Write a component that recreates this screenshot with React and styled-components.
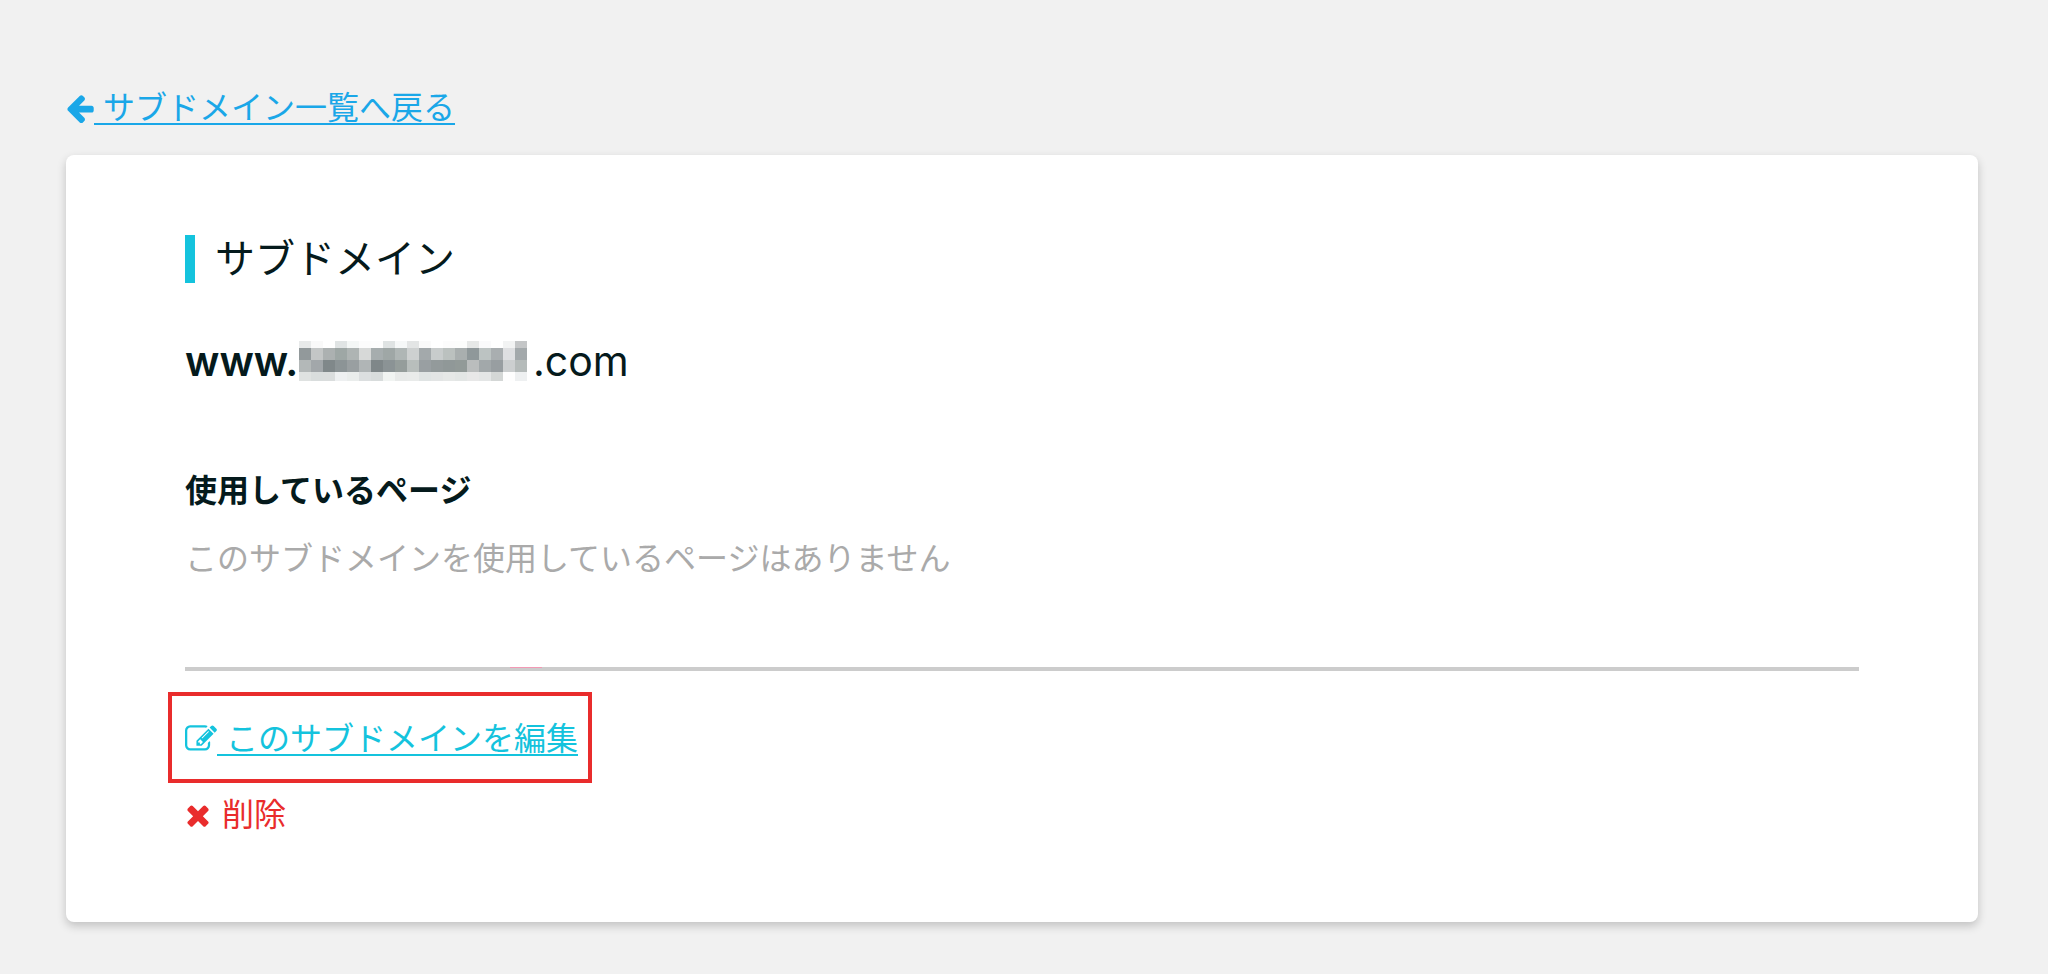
import styled, { createGlobalStyle } from "styled-components";

const GlobalStyle = createGlobalStyle`
  * {
    box-sizing: border-box;
  }
  body {
    margin: 0;
    background-color: #f1f1f1;
    color: #051a1c;
    font-family: Inter, "Noto Sans CJK JP", sans-serif;
    font-size: 32px;
    line-height: 48px;
  }
`;
const Page = styled.main`
  padding: 84px 70px 52px 66px;
`;
const IconLink = styled.a`
  display: flex;
  align-items: center;
  width: fit-content;
  color: ${(props) => props.$color};
  text-decoration: none;
`;
const Icon = styled.svg`
  flex: none;
  width: ${(props) => (props.$wide ? "32px" : "28px")};
  height: 32px;
  fill: currentColor;
`;
const LinkText = styled.span`
  white-space: pre;
  text-decoration: ${(props) => (props.$plain ? "none" : "underline")};
  text-decoration-thickness: 2px;
  text-underline-offset: 4px;
  text-decoration-skip-ink: none;
`;
const Card = styled.section`
  margin-top: 23px;
  padding: 80px 119px 83px;
  border-radius: 8px;
  background-color: #fff;
  box-shadow: 0 4px 10px rgba(0, 0, 0, 0.2);
`;
const Title = styled.h1`
  margin: 0;
  padding-left: 20px;
  border-left: 10px solid #14c3dd;
  font-size: 40px;
  font-weight: normal;
  line-height: 48px;
`;
const Domain = styled.p`
  display: flex;
  align-items: center;
  margin: 50px 0 0;
  font-size: 41px;
  line-height: 56px;
  b {
    min-width: 114px;
    font-weight: 600;
  }
`;
const Mosaic = styled.svg`
  flex: none;
  width: 228px;
  height: 40px;
  margin-right: 6px;
`;
const SubTitle = styled.h2`
  margin: 78px 0 0;
  font-size: 32px;
  font-weight: bold;
  line-height: 48px;
`;
const Empty = styled.p`
  margin: 20px 0 0;
  color: #aaa;
`;
const Divider = styled.hr`
  height: 4px;
  margin: 84px 0 0;
  border: 0;
  background: linear-gradient(#f29ab5, #f29ab5) 325px 0 / 32px 1px no-repeat
    #ccc;
`;
const Actions = styled.div`
  display: flex;
  flex-direction: column;
  align-items: flex-start;
  gap: 8px;
  margin: 21px 0 0 -17px;
`;
const Highlight = styled.div`
  padding: 19px 10px 16px 13px;
  border: 4px solid #e92c2c;
`;
const DeleteRow = styled.div`
  padding-left: 17px;
`;

// hidden part of the domain name, as rows of grey blocks
const mosaicRows = [
  {
    y: 0,
    height: 7,
    colors:
      "e8eaea f9f9f9 ffffff e0e4e4 f4f7f6 fcfcfc fdfdfd dfe3e3 f6f8f8 e3e5e5 fafafa ffffff fcfcfc fcfdfc e6e8e7 fafafb ffffff f2f3f3 c4c6c7",
  },
  {
    y: 7,
    height: 12,
    colors:
      "92999b c3c6c6 acb1b1 9ea7a5 aeb4b3 d7d9d8 a6adae 9fa7a6 afb6b5 cdd0d0 a3a9ab c8cccc bbc1bf a9afaf 8f989a bcc3c2 a9aeb0 dedfe1 a3a9ab",
  },
  {
    y: 19,
    height: 12,
    colors:
      "b3b8b8 a2a7aa 80888a 8c9496 999fa1 b0b5b6 7f8789 8b9395 959d9b b8bebc 999fa2 939a9b 909898 929a98 babdbd a2a8aa 989ea1 cccfd0 b5bbba",
  },
  {
    y: 31,
    height: 9,
    colors:
      "dfe2e1 d9dddd dadddd eef0f1 eaedec dcdfe0 d8dcdc f1f4f2 e8eae9 e9ebea e0e4e4 e3e5e5 e6e8e7 e3e6e5 e8e8e8 e4e6e6 d4d7d6 fefefe eef0f1",
  },
];

function MaskedName() {
  return (
    <Mosaic viewBox="0 0 228 40" shapeRendering="crispEdges" aria-hidden="true">
      {mosaicRows.map((row) =>
        row.colors.split(" ").map((color, i) => (
          <rect
            key={`${row.y}-${i}`}
            x={i * 12}
            y={row.y}
            width="12"
            height={row.height}
            fill={`#${color}`}
          />
        ))
      )}
    </Mosaic>
  );
}

export default function App() {
  return (
    <>
      <GlobalStyle />
      <Page>
        <IconLink href="#" $color="#1aa7e8">
          <Icon viewBox="112 0 1568 1792" aria-hidden="true">
            <path d="M1664 896v128q0 53-32.5 90.5t-84.5 37.5h-704l293 294q38 36 38 90t-38 90l-75 76q-37 37-90 37-52 0-91-37l-651-652q-37-37-37-90 0-52 37-91l651-650q38-38 91-38 52 0 90 38l75 74q38 38 38 91t-38 91l-293 293h704q52 0 84.5 37.5t32.5 90.5z" />
          </Icon>
          <LinkText> サブドメイン一覧へ戻る</LinkText>
        </IconLink>
        <Card>
          <Title>サブドメイン</Title>
          <Domain>
            <b>www.</b>
            <MaskedName />
            <span>.com</span>
          </Domain>
          <SubTitle>使用しているページ</SubTitle>
          <Empty>このサブドメインを使用しているページはありません</Empty>
          <Divider />
          <Actions>
            <Highlight>
              <IconLink href="#" $color="#14c3dd">
                <Icon $wide viewBox="0 0 1792 1792" aria-hidden="true">
                  <path d="M888 1184l116-116-152-152-116 116v56h96v96h56zm440-720q-16-16-33 1l-350 350q-17 17-1 33t33-1l350-350q17-17 1-33zm80 594v190q0 119-84.5 203.5t-203.5 84.5h-832q-119 0-203.5-84.5t-84.5-203.5v-832q0-119 84.5-203.5t203.5-84.5h832q63 0 117 25 15 7 18 23 3 17-9 29l-49 49q-14 14-32 8-23-6-45-6h-832q-66 0-113 47t-47 113v832q0 66 47 113t113 47h832q66 0 113-47t47-113v-126q0-13 9-22l64-64q15-15 35-7t20 29zm-96-738l288 288-672 672h-288v-288zm444 132l-92 92-288-288 92-92q28-28 68-28t68 28l152 152q28 28 28 68t-28 68z" />
                </Icon>
                <LinkText> このサブドメインを編集</LinkText>
              </IconLink>
            </Highlight>
            <DeleteRow>
              <IconLink href="#" $color="#e92c2c">
                <Icon viewBox="168 0 1568 1792" aria-hidden="true">
                  <path d="M1490 1322q0 40-28 68l-136 136q-28 28-68 28t-68-28l-294-294-294 294q-28 28-68 28t-68-28l-136-136q-28-28-28-68t28-68l294-294-294-294q-28-28-28-68t28-68l136-136q28-28 68-28t68 28l294 294 294-294q28-28 68-28t68 28l136 136q28 28 28 68t-28 68l-294 294 294 294q28 28 28 68z" />
                </Icon>
                <LinkText $plain> 削除</LinkText>
              </IconLink>
            </DeleteRow>
          </Actions>
        </Card>
      </Page>
    </>
  );
}
